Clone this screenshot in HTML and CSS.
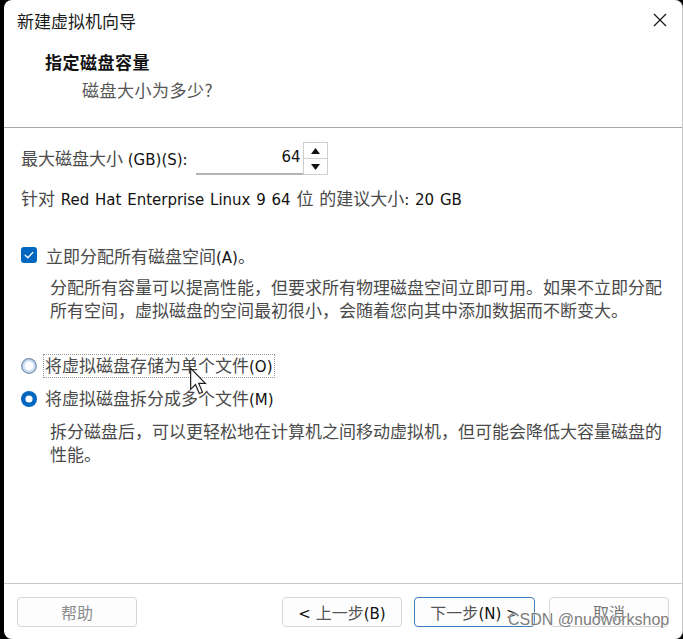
FILE: index.html
```html
<!DOCTYPE html>
<html lang="zh">
<head>
<meta charset="utf-8">
<title>新建虚拟机向导</title>
<link rel="stylesheet" href="styles.css">
</head>
<body>
<div class="window">
  <div class="titlebar">
    <span class="title">新建虚拟机向导</span>
    <svg class="close" width="14" height="14" viewBox="0 0 14 14"><path d="M1 1 L13 13 M13 1 L1 13" stroke="#1a1a1a" stroke-width="1.3" fill="none"/></svg>
  </div>
  <div class="header">
    <div class="h-title">指定磁盘容量</div>
    <div class="h-sub">磁盘大小为多少?</div>
  </div>
  <div class="content">
    <div class="size-row">
      <span class="lbl">最大磁盘大小<span class="en"> (GB)(S):</span></span>
      <div class="spin">
        <div class="spin-input en">64</div>
        <div class="spin-btns">
          <div class="spin-btn"><svg width="9" height="6" viewBox="0 0 9 6"><polygon points="4.5,0 9,6 0,6" fill="#111"/></svg></div>
          <div class="spin-btn"><svg width="9" height="6" viewBox="0 0 9 6"><polygon points="0,0 9,0 4.5,6" fill="#111"/></svg></div>
        </div>
      </div>
    </div>
    <div class="rec">针对<span class="en"> Red Hat Enterprise Linux 9 64 </span>位<span class="en"> </span>的建议大小<span class="en">: 20 GB</span></div>

    <div class="opt opt-check">
      <svg class="box" width="16" height="16" viewBox="0 0 16 16"><rect x="0" y="0" width="16" height="16" rx="3" fill="#0067c0"/><path d="M4.2 8.2 L6.8 10.7 L11.8 5.5" stroke="#fff" stroke-width="1.3" fill="none" stroke-linecap="round" stroke-linejoin="round"/></svg>
      <span class="opt-label">立即分配所有磁盘空间<span class="en">(A)</span>。</span>
    </div>
    <p class="desc">分配所有容量可以提高性能，但要求所有物理磁盘空间立即可用。如果不立即分配<br>所有空间，虚拟磁盘的空间最初很小，会随着您向其中添加数据而不断变大。</p>

    <div class="opt opt-radio first">
      <svg class="box" width="16" height="16" viewBox="0 0 16 16"><circle cx="8" cy="8" r="7.3" fill="#cddff4" stroke="#7890b0" stroke-width="1.3"/><circle cx="8" cy="8" r="4.4" fill="#fff"/></svg>
      <span class="opt-label focus">将虚拟磁盘存储为单个文件<span class="en">(O)</span></span>
    </div>
    <div class="opt opt-radio">
      <svg class="box" width="16" height="16" viewBox="0 0 16 16"><circle cx="8" cy="8" r="8" fill="#0067c0"/><circle cx="8" cy="8" r="3.6" fill="#fff"/></svg>
      <span class="opt-label">将虚拟磁盘拆分成多个文件<span class="en">(M)</span></span>
    </div>
    <p class="desc">拆分磁盘后，可以更轻松地在计算机之间移动虚拟机，但可能会降低大容量磁盘的<br>性能。</p>
  </div>
  <div class="footer">
    <div class="btn disabled"><span>帮助</span></div>
    <div class="spacer"></div>
    <div class="btn"><span><span class="en">&lt; </span>上一步<span class="en">(B)</span></span></div>
    <div class="btn primary"><span>下一步<span class="en">(N) &gt;</span></span></div>
    <div class="btn muted"><span>取消</span></div>
  </div>
  <svg class="cursor" width="19" height="29" viewBox="0 0 15 24"><path d="M1 1 L1 18.5 L5 14.6 L8.2 22 L10.8 20.9 L7.7 13.6 L13.2 13.6 Z" fill="#fff" stroke="#222" stroke-width="1" stroke-linejoin="miter"/></svg>
  <div class="watermark">CSDN @nuoworkshop</div>
</div>
</body>
</html>
```
FILE: styles.css
```css
html, body {
  margin: 0;
  padding: 0;
}
body {
  background: #000;
  width: 683px;
  height: 639px;
  overflow: hidden;
}
.window {
  position: relative;
  margin-left: 4px;
  width: 678px;
  height: 639px;
  background: #fff;
  border-right: 1px solid #c8c8c8;
  border-radius: 8px;
  display: flex;
  flex-direction: column;
  overflow: hidden;
  font-family: "Noto Sans CJK SC", sans-serif;
  font-size: 17px;
  color: #4a4a4a;
}
.en {
  font-family: "DejaVu Sans", sans-serif;
  font-size: 15px;
  color: #111;
}
.titlebar {
  height: 40px;
  flex: none;
  display: flex;
  align-items: center;
  justify-content: space-between;
  padding: 0 15px 0 13px;
}
.title {
  font-size: 17px;
  color: #1b1b1b;
}
.close {
  display: block;
}
.header {
  flex: none;
  height: 88px;
  box-sizing: border-box;
  padding: 10px 0 0 41px;
  border-bottom: 1px solid #a8a8a8;
}
.h-title {
  font-size: 17px;
  font-weight: 700;
  line-height: 24px;
  color: #111;
  letter-spacing: 0.5px;
}
.h-sub {
  margin-top: 4px;
  padding-left: 37px;
  line-height: 24px;
  color: #555;
  letter-spacing: 0.5px;
}
.content {
  flex: 1;
  padding: 14px 4px 0 17px;
}
.size-row {
  display: flex;
  align-items: center;
  height: 33px;
}
.lbl {
  line-height: 22px;
}
.spin {
  margin-left: 8px;
  display: flex;
  height: 33px;
}
.spin-input {
  width: 107px;
  box-sizing: border-box;
  border-bottom: 2px solid #b4b4b4;
  text-align: right;
  padding-right: 2px;
  line-height: 31px;
  font-size: 15px;
}
.spin-btns {
  width: 25px;
  display: flex;
  flex-direction: column;
  border: 1px solid #cfcfcf;
  box-sizing: border-box;
}
.spin-btn {
  flex: 1;
  display: flex;
  align-items: center;
  justify-content: center;
}
.spin-btn + .spin-btn {
  border-top: 1px solid #cfcfcf;
}
.rec {
  margin-top: 12px;
  line-height: 22px;
  word-spacing: 1px;
}
.opt {
  display: flex;
  align-items: center;
  height: 22px;
}
.opt .box {
  flex: none;
  display: block;
}
.opt-check {
  margin-top: 33px;
}
.opt-check .opt-label {
  margin-left: 9px;
}
.opt-radio {
  margin-top: 11px;
}
.opt-radio.first {
  margin-top: 34px;
}
.opt-radio .opt-label {
  margin-left: 6px;
  padding: 0 1px;
  line-height: 20px;
  border: 1px solid transparent;
}
.opt-radio .opt-label.focus {
  border: 1px dotted #9a9a9a;
}
.desc {
  margin: 8px 0 0 29px;
  line-height: 23px;
  white-space: nowrap;
}
.opt-check + .desc {
  margin-top: 9px;
}
.opt-radio + .desc {
  margin-top: 9px;
}
.footer {
  flex: none;
  height: 56px;
  box-sizing: border-box;
  border-top: 1px solid #c8c8c8;
  padding: 13px 13px 0 13px;
  display: flex;
  align-items: flex-start;
  gap: 12px;
}
.spacer {
  flex: 1;
}
.btn {
  width: 120px;
  height: 30px;
  box-sizing: border-box;
  border: 1px solid #d6d6d6;
  border-radius: 4px;
  background: #fdfdfd;
  display: flex;
  align-items: center;
  justify-content: center;
  font-size: 16px;
  color: #555;
  white-space: pre;
}
.btn .en {
  font-size: 15px;
}
.btn.disabled {
  color: #8c8c8c;
}
.btn.primary {
  width: 121px;
  border-color: #3f7cb9;
}
.btn.muted {
  margin-left: 2px;
  color: #777;
}
.cursor {
  position: absolute;
  left: 185px;
  top: 367px;
}
.watermark {
  position: absolute;
  left: 504px;
  top: 611px;
  font-family: "Liberation Sans", sans-serif;
  font-size: 16px;
  color: #7d7d7d;
  text-shadow: 0 0 2px #fff, 0 0 1px #fff;
  white-space: nowrap;
}
```
